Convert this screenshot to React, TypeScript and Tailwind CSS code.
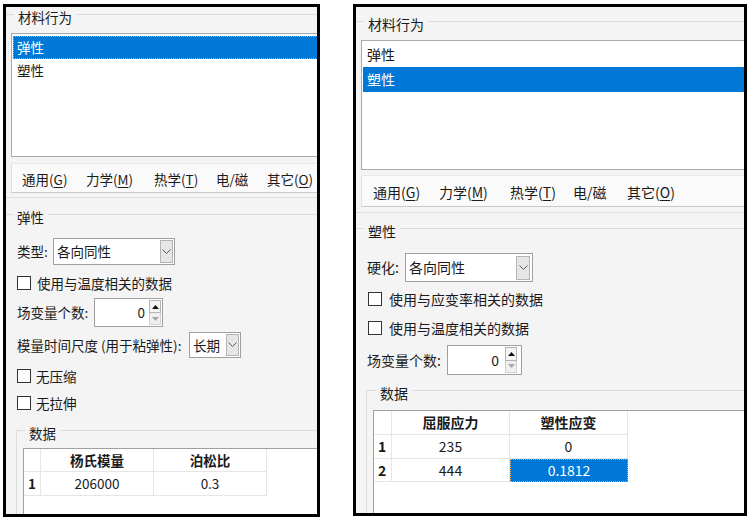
import React from "react";

const F = "[font-family:'Noto_Sans_CJK_SC','Noto_Sans',sans-serif]";

function GroupLine({ leftW, title, className = "" }: { leftW: string; title: string; className?: string }) {
  return (
    <div className={`flex h-px items-center ${className}`}>
      <div className={`h-px shrink-0 bg-[#dcdcdc] ${leftW}`} />
      <span className="translate-y-[2px] whitespace-nowrap px-[4px] leading-[20px]">{title}</span>
      <div className="h-px flex-1 bg-[#dcdcdc]" />
    </div>
  );
}

function Chevron() {
  return (
    <svg width="9" height="6" viewBox="0 0 9 6">
      <polyline points="0.5,0.5 4.5,4.5 8.5,0.5" fill="none" stroke="#5a5a5a" strokeWidth="1" />
    </svg>
  );
}

function Check({ label, gap }: { label: string; gap: string }) {
  return (
    <>
      <span className="h-[14px] w-[14px] shrink-0 border border-[#333333] bg-white" />
      <span className={`whitespace-nowrap ${gap}`}>{label}</span>
    </>
  );
}

function SpinButtons({ h }: { h: string }) {
  return (
    <div className={`mr-px flex w-[12px] flex-col ${h}`}>
      <div className="flex flex-1 items-center justify-center border border-[#b4b4b4] bg-[#f4f4f4]">
        <svg width="7" height="4" viewBox="0 0 7 4">
          <polygon points="0,4 3.5,0 7,4" fill="#111" />
        </svg>
      </div>
      <div className="flex flex-1 items-center justify-center border border-t-0 border-[#d0d0d0] bg-[#efefef]">
        <svg width="7" height="4" viewBox="0 0 7 4">
          <polygon points="0,0 3.5,4 7,0" fill="#a8a8a8" />
        </svg>
      </div>
    </div>
  );
}

function LeftPanel() {
  return (
    <div className="h-[513px] w-[317px] shrink-0 overflow-hidden border-[3px] border-black bg-[#f4f4f4] text-[13.5px] text-[#1a1a1a]">
      <GroupLine className="mt-[7px]" leftW="w-[8px]" title="材料行为" />
      <div className="ml-[5px] mt-[18px] h-[124px] w-[400px] border border-[#a9a9a9] bg-white pt-[2px]">
        <div className="ml-px flex h-[23px] items-center border border-dotted border-[#e8a050] bg-[#0078d7] pl-[3px] text-white">
          弹性
        </div>
        <div className="ml-px flex h-[23px] items-center pl-[4px]">塑性</div>
      </div>
      <div className="ml-[5px] mt-[6px] flex h-[30px] w-[400px] items-center border-b border-l border-t border-b-[#c8c8c8] border-l-[#e2e2e2] border-t-[#e8e8e8] bg-[#fafafa] pl-[10px] pt-[3px]">
        <span className="w-[64px] shrink-0 whitespace-nowrap">通用(<span className="underline underline-offset-2">G</span>)</span>
        <span className="w-[68px] shrink-0 whitespace-nowrap">力学(<span className="underline underline-offset-2">M</span>)</span>
        <span className="w-[62px] shrink-0 whitespace-nowrap">热学(<span className="underline underline-offset-2">T</span>)</span>
        <span className="w-[51px] shrink-0 whitespace-nowrap">电/磁</span>
        <span className="shrink-0 whitespace-nowrap">其它(<span className="underline underline-offset-2">O</span>)</span>
      </div>
      <div className="mt-[4px] h-px bg-[#dedede]" />
      <GroupLine className="mt-[16px]" leftW="w-[7px]" title="弹性" />

      <div className="mt-[23px] flex h-[27px] items-center pl-[11px]">
        <span className="w-[36px] shrink-0 whitespace-nowrap">类型:</span>
        <div className="flex h-[27px] w-[122px] shrink-0 items-center border border-[#a0a0a0] bg-white">
          <span className="flex-1 whitespace-nowrap pl-[3px]">各向同性</span>
          <div className="mr-px flex h-[23px] w-[13px] items-center justify-center border border-[#b4b4b4] bg-[#e6e6e6]">
            <Chevron />
          </div>
        </div>
      </div>

      <div className="mt-[8px] flex h-[20px] items-center pl-[11px]">
        <Check label="使用与温度相关的数据" gap="ml-[6px]" />
      </div>

      <div className="mt-[5px] flex h-[29px] items-center pl-[11px]">
        <span className="w-[77px] shrink-0 whitespace-nowrap">场变量个数:</span>
        <div className="flex h-[29px] w-[69px] shrink-0 items-center border border-[#a0a0a0] bg-white">
          <span className="flex-1 pr-[4px] text-right">0</span>
          <SpinButtons h="h-[25px]" />
        </div>
      </div>

      <div className="mt-[5px] flex h-[26px] items-center pl-[11px]">
        <span className="w-[172px] shrink-0 whitespace-nowrap">模量时间尺度 (用于粘弹性):</span>
        <div className="flex h-[26px] w-[52px] shrink-0 items-center border border-[#a0a0a0] bg-white">
          <span className="flex-1 whitespace-nowrap pl-[3px]">长期</span>
          <div className="mr-px flex h-[22px] w-[13px] items-center justify-center border border-[#b4b4b4] bg-[#e6e6e6]">
            <Chevron />
          </div>
        </div>
      </div>

      <div className="mt-[8px] flex h-[20px] items-center pl-[11px]">
        <Check label="无压缩" gap="ml-[5px]" />
      </div>
      <div className="mt-[7px] flex h-[20px] items-center pl-[11px]">
        <Check label="无拉伸" gap="ml-[5px]" />
      </div>

      <div className="ml-[10px] mt-[17px] h-[120px] border-l border-[#dcdcdc]">
        <GroupLine leftW="w-[8px]" title="数据" />
        <div className="ml-[6px] mt-[17px] h-[100px] w-[400px] border-l border-t border-[#a0a0a0] bg-white">
          <div className="flex h-[23px] font-bold">
            <div className="w-[17px] border-b border-r border-[#e6e6e6]" />
            <div className="flex w-[113px] items-center justify-center border-b border-r border-[#e6e6e6]">杨氏模量</div>
            <div className="flex w-[113px] items-center justify-center border-b border-r border-[#e6e6e6]">泊松比</div>
          </div>
          <div className="flex h-[24px]">
            <div className="flex w-[17px] items-center pl-[4px] font-bold border-b border-r border-[#e6e6e6]">1</div>
            <div className="flex w-[113px] items-center justify-center border-b border-r border-[#e6e6e6]">206000</div>
            <div className="flex w-[113px] items-center justify-center border-b border-r border-[#e6e6e6]">0.3</div>
          </div>
        </div>
      </div>
    </div>
  );
}

function RightPanel() {
  return (
    <div className="h-[512px] w-[394px] shrink-0 overflow-hidden border-[3px] border-black bg-[#f4f4f4] text-[14px] text-[#1a1a1a]">
      <GroupLine className="mt-[14px]" leftW="w-[8px]" title="材料行为" />
      <div className="ml-[5px] mt-[18px] h-[130px] w-[420px] border border-[#a9a9a9] bg-white pt-px">
        <div className="ml-px flex h-[25px] items-center pl-[4px]">弹性</div>
        <div className="ml-px flex h-[25px] items-center border border-[#0078d7] bg-[#0078d7] pl-[3px] text-white">塑性</div>
      </div>
      <div className="ml-[5px] mt-[5px] flex h-[32px] w-[420px] items-center border-b border-l border-t border-b-[#c8c8c8] border-l-[#e2e2e2] border-t-[#e8e8e8] bg-[#fafafa] pl-[11px] pt-[2px]">
        <span className="w-[66px] shrink-0 whitespace-nowrap">通用(<span className="underline underline-offset-2">G</span>)</span>
        <span className="w-[71px] shrink-0 whitespace-nowrap">力学(<span className="underline underline-offset-2">M</span>)</span>
        <span className="w-[63px] shrink-0 whitespace-nowrap">热学(<span className="underline underline-offset-2">T</span>)</span>
        <span className="w-[54px] shrink-0 whitespace-nowrap">电/磁</span>
        <span className="shrink-0 whitespace-nowrap">其它(<span className="underline underline-offset-2">O</span>)</span>
      </div>
      <div className="mt-[5px] h-px bg-[#dedede]" />
      <GroupLine className="mt-[15px]" leftW="w-[8px]" title="塑性" />

      <div className="mt-[24px] flex h-[29px] items-center pl-[11px]">
        <span className="w-[38px] shrink-0 whitespace-nowrap">硬化:</span>
        <div className="flex h-[29px] w-[128px] shrink-0 items-center border border-[#a0a0a0] bg-white">
          <span className="flex-1 whitespace-nowrap pl-[3px]">各向同性</span>
          <div className="mr-[2px] flex h-[24px] w-[14px] items-center justify-center border border-[#b4b4b4] bg-[#e6e6e6]">
            <Chevron />
          </div>
        </div>
      </div>

      <div className="mt-[7px] flex h-[20px] items-center pl-[12px]">
        <Check label="使用与应变率相关的数据" gap="ml-[7px]" />
      </div>
      <div className="mt-[9px] flex h-[20px] items-center pl-[12px]">
        <Check label="使用与温度相关的数据" gap="ml-[7px]" />
      </div>

      <div className="mt-[7px] flex h-[30px] items-center pl-[11px]">
        <span className="w-[80px] shrink-0 whitespace-nowrap">场变量个数:</span>
        <div className="flex h-[30px] w-[75px] shrink-0 items-center border border-[#a0a0a0] bg-white">
          <span className="flex-1 pr-[6px] text-right">0</span>
          <div className="mr-[3px] flex">
            <SpinButtons h="h-[26px]" />
          </div>
        </div>
      </div>

      <div className="ml-[10px] mt-[15px] h-[130px] border-l border-[#dcdcdc]">
        <GroupLine leftW="w-[9px]" title="数据" />
        <div className="ml-[6px] mt-[19px] h-[110px] w-[420px] border-l border-t border-[#a0a0a0] bg-white">
          <div className="flex h-[24px] font-bold">
            <div className="w-[18px] border-b border-r border-[#e6e6e6]" />
            <div className="flex w-[118px] items-center justify-center border-b border-r border-[#e6e6e6]">屈服应力</div>
            <div className="flex w-[118px] items-center justify-center border-b border-r border-[#e6e6e6]">塑性应变</div>
          </div>
          <div className="flex h-[24px]">
            <div className="flex w-[18px] items-center pl-[4px] font-bold border-b border-r border-[#e6e6e6]">1</div>
            <div className="flex w-[118px] items-center justify-center border-b border-r border-[#e6e6e6]">235</div>
            <div className="flex w-[118px] items-center justify-center border-b border-r border-[#e6e6e6]">0</div>
          </div>
          <div className="flex h-[23px]">
            <div className="flex w-[18px] items-center pl-[4px] font-bold border-b border-r border-[#e6e6e6]">2</div>
            <div className="flex w-[118px] items-center justify-center border-b border-r border-[#e6e6e6]">444</div>
            <div className="flex w-[118px] items-center justify-center border border-dotted border-[#e8a050] bg-[#0078d7] text-white">0.1812</div>
          </div>
        </div>
      </div>
    </div>
  );
}

export default function App() {
  return (
    <div className={`flex h-[522px] w-[750px] gap-[33px] bg-white pl-[3px] pt-[4px] ${F}`}>
      <LeftPanel />
      <RightPanel />
    </div>
  );
}
